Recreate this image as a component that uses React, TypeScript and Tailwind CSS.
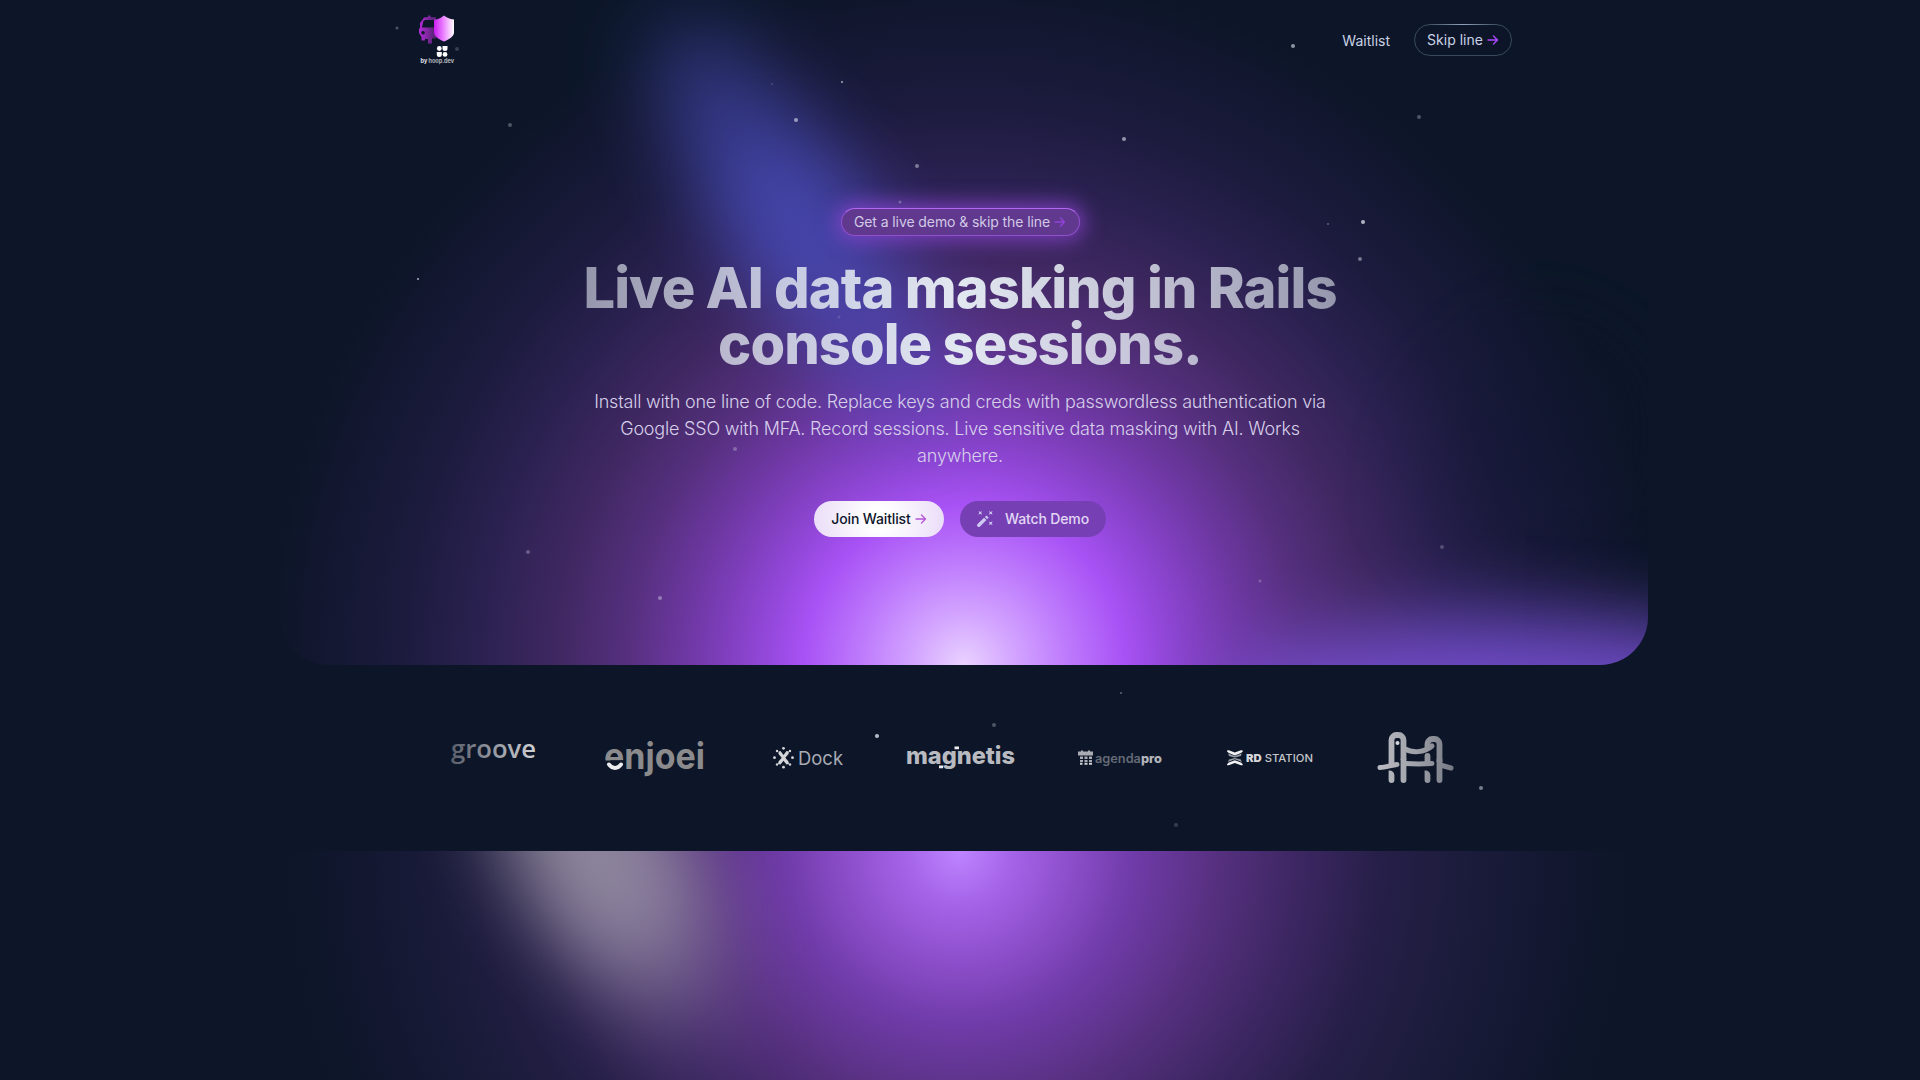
import { Fragment } from "react";

const stars: [number, number, number, number][] = [
  [397, 28, 3, 0.3], [510, 125, 4, 0.3], [418, 279, 2, 0.75], [796, 120, 4, 0.6],
  [842, 82, 2, 0.7], [772, 84, 2, 0.2], [917, 166, 4, 0.45], [1124, 139, 4, 0.6],
  [1293, 46, 4, 0.6], [1419, 117, 4, 0.3], [1363, 222, 4, 0.75], [1328, 224, 2, 0.35],
  [1360, 259, 4, 0.45], [735, 449, 4, 0.3], [528, 552, 4, 0.3], [660, 598, 4, 0.4],
  [1442, 547, 4, 0.25], [1260, 581, 3, 0.25], [1121, 693, 2, 0.4], [994, 725, 4, 0.3],
  [877, 736, 4, 0.8], [1481, 788, 4, 0.5], [1176, 825, 4, 0.2], [900, 202, 3, 0.3],
  [457, 49, 4, 0.2], [839, 317, 3, 0.15],
];

const introLines = [
  "Install with one line of code. Replace keys and creds with passwordless authentication via",
  "Google SSO with MFA. Record sessions. Live sensitive data masking with AI. Works",
  "anywhere.",
];

function Stars() {
  return (
    <div className="pointer-events-none absolute inset-0">
      {stars.map(([x, y, s, o]) => (
        <i
          key={`${x}-${y}`}
          className="absolute -translate-x-1/2 -translate-y-1/2 rounded-full bg-slate-200"
          style={{ left: x, top: y, width: s, height: s, opacity: o }}
        />
      ))}
    </div>
  );
}

function Arrow({ className }: { className: string }) {
  return (
    <svg className={`h-[10px] w-[12px] shrink-0 ${className}`} viewBox="0 0 12 10" fill="none" stroke="currentColor" strokeWidth="1.300" strokeLinecap="round" strokeLinejoin="round">
      <path d="M1 5h9.500M6.500 1l4 4-4 4" />
    </svg>
  );
}

function Logo() {
  return (
    <svg className="h-[52px] w-[40px] overflow-visible" viewBox="0 0 40 52" aria-label="by hoop.dev">
      <defs>
        <linearGradient id="shield" x1="0" x2="1" y1="0" y2="0">
          <stop offset="0" stopColor="#c81cf0" />
          <stop offset="0.45" stopColor="#ea7dff" />
          <stop offset="1" stopColor="#fff" />
        </linearGradient>
        <linearGradient id="bus" x1="0" x2="1" y1="0" y2="0">
          <stop offset="0" stopColor="#b52ad9" />
          <stop offset="1" stopColor="#4b2468" />
        </linearGradient>
      </defs>
      <path
        fill="url(#bus)"
        fillRule="evenodd"
        d="M5 1.500 9 1V-.5h2.500V1H17v21.500h-4v5H9V23H6v1.500H2.500V21L0 17v-4l1-1V7zM4.500 5 3 11.500h12V4H6zM4 15a1.800 1.800 0 1 0 .1 3.600A1.800 1.800 0 0 0 4 15z"
      />
      <path fill="url(#shield)" d="M15 3.500c5 0 7-2 10-4 3 2 5 3.500 10 4v13c0 4-5 7-10 9-5-2-10-5-10-9z" />
      <g fill="#fff">
        <circle cx="20.300" cy="32.500" r="2.400" />
        <path d="M23.500 30h5v2.500a2.500 2.500 0 0 1-5 0zM17.800 36h5v2.400a2.500 2.500 0 1 1-5 0z" />
        <circle cx="26" cy="38.400" r="2.400" />
      </g>
      <text x="1.500" y="46.800" fontSize="6.500" fontWeight="700" fontFamily="Inter, sans-serif" fill="#e8e9ee" textLength="33.500" lengthAdjust="spacingAndGlyphs">
        by <tspan fillOpacity="0.75">hoop.dev</tspan>
      </text>
    </svg>
  );
}

function Wand() {
  return (
    <svg className="h-4 w-4" viewBox="0 0 16 16" fill="#cfc9f2">
      <path d="M.6 13 7 6.700l2.400 2.200-6.400 6.500a1.600 1.600 0 0 1-2.400-2.400z" />
      <path d="m7.900 6 1.600-1.500 2.100 2.100-1.500 1.600z" />
      <path d="m1.500 0 1.800.9L5 0l-.8 1.800L5 3.700l-1.800-.9-1.800.9.900-1.900zM11.900 0l1.800.9 1.900-.9-.9 1.800.9 1.900-1.900-.9-1.800.9.800-1.900zM11.900 10.400l1.800.900 1.900-.9-.9 1.800.9 1.900-1.900-.9-1.800.9.800-1.900z" />
    </svg>
  );
}

function Groove() {
  return (
    <svg className="h-[34px] w-[84px] overflow-visible" viewBox="0 0 84 34">
      <defs>
        <linearGradient id="groove" x1="0" x2="1">
          <stop offset="0" stopColor="#595e6b" />
          <stop offset="0.5" stopColor="#9699a1" />
          <stop offset="1" stopColor="#d0d1d5" />
        </linearGradient>
      </defs>
      <text x="-1" y="17" fontSize="26" fontWeight="600" fontFamily="'Open Sans', sans-serif" fill="url(#groove)" textLength="85" lengthAdjust="spacingAndGlyphs">groove</text>
    </svg>
  );
}

function Enjoei() {
  return (
    <svg className="h-[40px] w-[99px] overflow-visible" viewBox="0 0 99 40">
      <text x="-1" y="30.500" fontSize="36" fontWeight="700" fontFamily="Inter, sans-serif" fill="#8b8b8d" textLength="101" lengthAdjust="spacingAndGlyphs">enjoei</text>
      <path d="M-1 22.500h20.300v10H-1z" fill="#0c1628" />
      <path d="M4 26.500c3 4.500 9 4.500 12 0" fill="none" stroke="#ededf0" strokeWidth="4" strokeLinecap="round" />
    </svg>
  );
}

function Dock() {
  return (
    <svg className="h-[24px] w-[70px] overflow-visible" viewBox="0 0 70 24">
      <g fill="#d5d6da">
        <path d="m5.500 5.500 2-.5L10.500 9l3-4 2.500.5-.5 2.500-3.200 3.700 3.200 3.800.5 2.500-2.500.5-3-3.800-3 3.800-2.500-.5.5-2.500 3.200-3.800L5.500 8z" />
        <circle cx="10.500" cy="2.300" r="1.400" /><circle cx="10.500" cy="21.200" r="1.400" />
        <circle cx="1.500" cy="11.700" r="1.400" /><circle cx="19.500" cy="11.700" r="1.400" />
        <circle cx="4" cy="5" r="1.200" /><circle cx="17" cy="5" r="1.200" />
        <circle cx="4" cy="18.500" r="1.200" /><circle cx="17" cy="18.500" r="1.200" />
      </g>
      <text x="25" y="18.500" fontSize="18.500" fontWeight="400" fontFamily="Inter, sans-serif" fill="#a9abb4" textLength="45" lengthAdjust="spacingAndGlyphs">Dock</text>
    </svg>
  );
}

function Magnetis() {
  return (
    <svg className="h-[36px] w-[107px] overflow-visible" viewBox="0 0 107 36">
      <text x="-1" y="24" fontSize="24" fontWeight="800" fontFamily="Inter, sans-serif" fill="#b9bac0" textLength="109" lengthAdjust="spacingAndGlyphs">magnetis</text>
      <path fill="#eeeef1" d="M47.500 6.500H52v2.800h-4.500zM32 25.500h4v2.800h-4z" />
    </svg>
  );
}

function AgendaPro() {
  return (
    <svg className="h-[24px] w-[85px] overflow-visible" viewBox="0 0 85 24">
      <g fill="#aaacb4">
        <path d="M3 4.500h2v1h5v-1h2v1h3v4H0v-4h3z" />
        <path d="M2 10.500h3V13H2zM6.500 10.500h3V13h-3zM11 10.500h3V13h-3zM2 14h3v2H2zM6.500 14h3v2h-3zM11 14h3v2h-3z" />
      </g>
      <path fill="#d5d6da" d="M2 16.800h2.500v2H2zM6.500 16.800h3v2h-3zM11 16.800h3v2h-3z" />
      <text x="17" y="16.800" fontSize="12.500" fontFamily="Inter, sans-serif" fontWeight="600" fill="#656a76" textLength="67" lengthAdjust="spacingAndGlyphs">
        agenda<tspan fill="#b3b5bc" fontWeight="800">pro</tspan>
      </text>
    </svg>
  );
}

function RdStation() {
  return (
    <svg className="h-[20px] w-[87px] overflow-visible" viewBox="0 0 87 20">
      <g fill="#f1f1f3">
        <path d="M0 3.500C0 2 1.200 2 2.500 2.500l5.300 2 5.400-2C14.500 2 15.800 2 15.800 3.500L14 5 7.800 7.400 1.800 5z" />
        <path d="M0 16.200c0 1.500 1.200 1.300 2.500.8l5.300-2 5.400 2c1.300.5 2.600.7 2.600-.8L14 14.500l-6.200-2.300-6 2.300z" />
      </g>
      <path fill="#9a9da5" d="M1 5.500 7.800 8l7-2.500-1 2.500-6 1.400L2 8zM1 14l6.800-2.800L14.800 14l-1-2.500-6-1.600L2 11.500z" />
      <text x="19" y="13.700" fontSize="10.800" fontFamily="Inter, sans-serif" fontWeight="500" fill="#c5c6cb" textLength="67" lengthAdjust="spacingAndGlyphs">
        <tspan fontWeight="900" fill="#d5d6da">RD</tspan> STATION
      </text>
    </svg>
  );
}

function Bridge() {
  return (
    <svg className="h-[52px] w-[78px]" viewBox="0 0 78 52">
      <defs>
        <linearGradient id="bridge" gradientUnits="userSpaceOnUse" x1="0" x2="78" y1="0" y2="0">
          <stop offset="0" stopColor="#bbbcc2" />
          <stop offset="0.5" stopColor="#9fa1a8" />
          <stop offset="1" stopColor="#747883" />
        </linearGradient>
      </defs>
      <g fill="none" stroke="url(#bridge)" strokeWidth="5.800" strokeLinejoin="round">
        <path d="M14.500 32V8a5 5 0 0 1 5-5h2a5 5 0 0 1 5 5v20" />
        <path d="M50.500 17v-5a5 5 0 0 1 5-5h2a5 5 0 0 1 5 5v18" />
        <path strokeLinecap="round" d="M26.500 28v20M62.500 28v20M50.500 24v6" />
      </g>
      <path fill="url(#bridge)" d="M11.600 38.500c4 0 5.800 2 5.800 5V48a2.900 2.900 0 0 1-5.800 0zM47.600 38.500c4 0 5.800 2 5.800 5V48a2.900 2.900 0 0 1-5.800 0z" />
      <g fill="none" stroke="url(#bridge)" strokeWidth="5" strokeLinecap="round">
        <path d="M28 17c7 4 19 4 27-3" />
        <path d="M3 35.500c5 0 12-2.500 17-3M28 31.500c9 .5 18 .5 27 0M65 33.500l9 2.500" />
      </g>
      <circle cx="20.500" cy="11" r="2" fill="#d6d7da" />
    </svg>
  );
}

export default function App() {
  return (
    <div className="relative h-[1080px] w-full overflow-hidden bg-[#0c1628] font-['Inter',sans-serif] text-slate-200">
      <section className="relative mx-auto h-[665px] w-[1368px] translate-x-[4px]">
        <div className="absolute inset-0 overflow-hidden rounded-b-[48px]">
          <div className="absolute inset-0 bg-[radial-gradient(circle_700px_at_684px_665px,#e9d2ff_0px,#d3a5ff_50px,#bd79fc_105px,#a852f5_160px,#8d45d2_210px,#7139a8_270px,#56307f_335px,#402862_405px,#2a2150_485px,#1c1b3e_560px,#12172f_650px,#0c1628_700px)]" />
          <div className="absolute left-[420px] top-[0px] h-[340px] w-[120px] rotate-[-32deg] rounded-[50%] bg-[#4a50c0] opacity-60 blur-[42px]" />
          <div className="absolute left-[495px] top-[110px] h-[340px] w-[130px] rotate-[-34deg] rounded-[50%] bg-[#4c4fc4] opacity-60 blur-[42px]" />
          <div className="absolute left-[1160px] top-[340px] h-[230px] w-[170px] rotate-[30deg] rounded-[50%] bg-[#0f1530] opacity-30 blur-[45px]" />
          <div className="absolute left-[930px] top-[618px] h-[180px] w-[640px] rounded-[50%] bg-[#7850d4] opacity-90 blur-[38px]" />
        </div>
      </section>

      <header className="absolute inset-x-0 top-0 mx-auto flex h-20 w-[1104px] items-center justify-between">
        <div className="pl-[11px] pt-1"><Logo /></div>
        <nav className="flex items-center gap-6 text-sm">
          <a className="pt-0.5 text-[#cbd2e6]">Waitlist</a>
          <a className="relative flex h-8 w-[98px] items-center justify-center gap-1 rounded-full border border-slate-600/80 text-[#cbd2e6]">
            <span className="absolute inset-x-3 -top-px h-px bg-linear-to-r from-transparent via-slate-400 to-transparent" />
            Skip line <Arrow className="text-purple-500" />
          </a>
        </nav>
      </header>

      <main className="absolute inset-x-0 top-[208px] flex flex-col items-center text-center">
        <a className="flex h-[28px] w-[239px] items-center justify-center gap-1 whitespace-nowrap rounded-full border border-[#9050cc] border-t-[#b266f2] bg-[#60398f] text-sm tracking-[-0.006em] text-[#d2c9e6] shadow-[0_0_20px_5px_rgba(147,70,220,0.7)]">
          Get a live demo &amp; skip the line <Arrow className="text-[#9143d8]" />
        </a>
        <h1 className="mt-[24px] whitespace-nowrap bg-linear-to-r from-slate-200/60 via-slate-200 to-slate-200/60 bg-clip-text pb-3 text-[56px] font-extrabold leading-[56px] tracking-[-0.017em] text-transparent">
          Live AI data masking in Rails<br />console sessions.
        </h1>
        <p className="mt-[4px] whitespace-nowrap text-lg font-[330] leading-[27px] tracking-[-0.011em] text-[#d6cfea]">
          {introLines.map((line) => (
            <Fragment key={line}>{line}<br /></Fragment>
          ))}
        </p>
        <div className="mt-[32px] flex gap-4 text-sm font-medium tracking-[-0.01em]">
          <a className="flex h-9 w-[130px] items-center justify-center gap-1 rounded-full bg-[radial-gradient(circle,#ffffff_15%,#eadcf8_100%)] text-slate-900">
            Join Waitlist <Arrow className="text-[#b455d8]" />
          </a>
          <a className="flex h-9 w-[146px] items-center justify-center gap-3 rounded-full bg-[#7640b4] text-[#e2d7f5]">
            <Wand /> Watch Demo
          </a>
        </div>
      </main>

      <section className="flex h-[186px] items-center pl-[452px]">
        <Groove />
        <div className="ml-[69px]"><Enjoei /></div>
        <div className="ml-[69px]"><Dock /></div>
        <div className="ml-[64px]"><Magnetis /></div>
        <div className="ml-[64px]"><AgendaPro /></div>
        <div className="ml-[64px]"><RdStation /></div>
        <div className="ml-[63px]"><Bridge /></div>
      </section>

      <section className="relative mx-auto h-[229px] w-[1368px] overflow-hidden">
        <div className="absolute inset-0 bg-[radial-gradient(ellipse_680px_680px_at_683px_0px,#be85ff_0%,#a563e8_8%,#8b4dc8_17%,#713cab_25%,#56307f_38%,#3e2764_49%,#261f48_62%,#1a1b3a_76%,#11172e_90%,#0c1628_100%)]" />
        <div className="absolute left-[240px] top-[-150px] h-[280px] w-[150px] rotate-[-30deg] rounded-[50%] bg-[#a8a2ae] opacity-80 blur-[42px]" />
        <div className="absolute left-[300px] top-[-60px] h-[260px] w-[130px] rotate-[-25deg] rounded-[50%] bg-[#8d84a0] opacity-50 blur-[45px]" />
      </section>
      <Stars />
    </div>
  );
}
